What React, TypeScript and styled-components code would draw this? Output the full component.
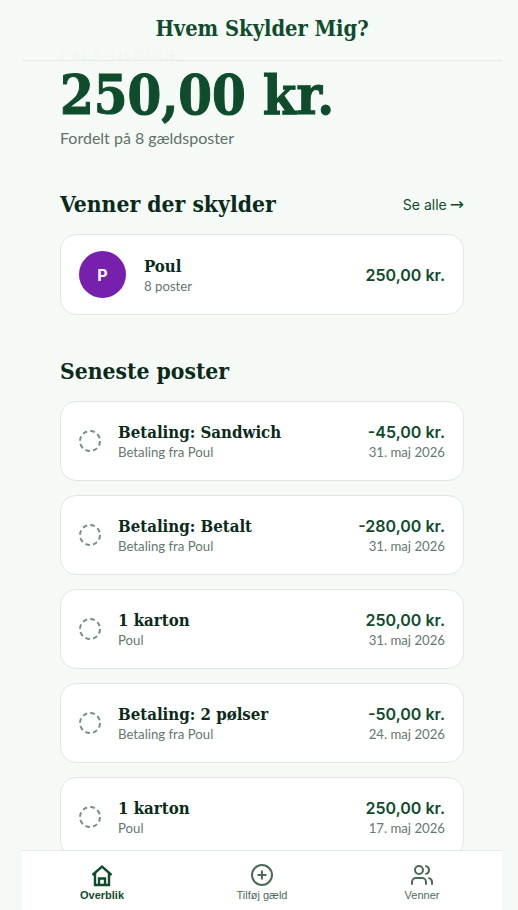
import styled, { createGlobalStyle } from "styled-components";
import { Users } from "lucide-react";

const GlobalStyle = createGlobalStyle`
  html, body {
    margin: 0;
    padding: 0;
    height: 100%;
    background: #f6faf7;
    font-family: "Inter", "Liberation Sans", sans-serif;
  }
  * { box-sizing: border-box; }
`;

const serif = `"DejaVu Serif Condensed", "DejaVu Serif", "Liberation Serif", serif`;
const sans = `"Lato", "Inter", "Liberation Sans", sans-serif`;

const Screen = styled.div`
  position: relative;
  width: 480px;
  height: 910px;
  margin-left: 22px;
  overflow: hidden;
`;

const Header = styled.header`
  position: absolute;
  top: 0;
  left: 0;
  right: 0;
  height: 61px;
  display: flex;
  justify-content: center;
  align-items: center;
  padding-bottom: 4px;
  background: rgba(246, 250, 247, 0.97);
  border-bottom: 1px solid #e3e9e5;
`;

const HeaderTitle = styled.h1`
  margin: 0;
  font-family: ${serif};
  font-size: 21.7px;
  font-weight: 700;
  color: #0f4c2c;
`;

const Main = styled.main`
  padding: 47px 38px 0;
`;

const Label = styled.div`
  font-size: 14px;
  line-height: 17px;
  letter-spacing: 1.8px;
  color: #5f7268;
`;

const Total = styled.div`
  margin-top: -1px;
  font-family: ${serif};
  font-size: 54px;
  line-height: 64px;
  font-weight: 700;
  -webkit-text-stroke: 1px #0f4c2c;
  color: #0f4c2c;
`;

const TotalNote = styled.div`
  margin-top: 1px;
  font-family: ${sans};
  font-size: 16px;
  line-height: 20px;
  color: #5f7268;
`;

const SectionHead = styled.div<{ $top: number }>`
  display: flex;
  justify-content: space-between;
  align-items: center;
  margin-top: ${(p) => p.$top}px;
  margin-bottom: 15px;
  height: 30px;
`;

const SectionTitle = styled.h2`
  margin: 0;
  font-family: ${serif};
  font-size: 22.7px;
  font-weight: 700;
  color: #0a2a1a;
`;

const SeeAll = styled.a`
  display: flex;
  align-items: center;
  gap: 3px;
  font-family: "Inter", sans-serif;
  font-size: 14px;
  color: #0f4c2c;
`;

const Arrow = styled.span`
  font-family: "DejaVu Sans", sans-serif;
  font-size: 17px;
  line-height: 14px;
`;

const Card = styled.div<{ $height: number }>`
  display: flex;
  align-items: center;
  height: ${(p) => p.$height}px;
  padding: 0 18px;
  background: #ffffff;
  border: 1px solid #e1e8e3;
  border-radius: 16px;
`;

const Avatar = styled.div`
  width: 47px;
  height: 47px;
  border-radius: 50%;
  display: flex;
  align-items: center;
  justify-content: center;
  margin-right: 18px;
  background: #7620ad;
  color: #ffffff;
  font-family: "Inter", sans-serif;
  font-size: 16px;
  font-weight: 700;
`;

const Spinner = styled.svg`
  flex: none;
  display: block;
  margin-right: 17px;
`;

const Info = styled.div`
  flex: 1;
  min-width: 0;
`;

const Name = styled.div`
  font-family: ${serif};
  font-size: 16.7px;
  line-height: 22px;
  font-weight: 700;
  color: #0a2a1a;
`;

const Sub = styled.div`
  font-family: ${sans};
  font-size: 13.2px;
  line-height: 18px;
  color: #66786e;
`;

const Right = styled.div`
  text-align: right;
`;

const Amount = styled.div`
  font-family: "Inter", sans-serif;
  font-size: 16px;
  line-height: 22px;
  font-weight: 600;
  color: #0f4c2c;
`;

const List = styled.div`
  display: flex;
  flex-direction: column;
  gap: 14px;
`;

const Nav = styled.nav`
  position: absolute;
  left: 0;
  right: 0;
  bottom: 0;
  height: 60px;
  display: grid;
  grid-template-columns: repeat(3, 1fr);
  background: #ffffff;
  border-top: 1px solid #e3e9e5;
`;

const NavItem = styled.div<{ $active?: boolean }>`
  display: flex;
  flex-direction: column;
  align-items: center;
  padding-top: 12px;
  font-family: "Liberation Sans", sans-serif;
  font-size: 11px;
  line-height: 13px;
  font-weight: ${(p) => (p.$active ? 700 : 400)};
  color: ${(p) => (p.$active ? "#0f4c2c" : "#4b6b59")};
  svg {
    display: block;
    margin-bottom: 2px;
  }
`;

const posts = [
  { title: "Betaling: Sandwich", sub: "Betaling fra Poul", amount: "-45,00 kr.", date: "31. maj 2026" },
  { title: "Betaling: Betalt", sub: "Betaling fra Poul", amount: "-280,00 kr.", date: "31. maj 2026" },
  { title: "1 karton", sub: "Poul", amount: "250,00 kr.", date: "31. maj 2026" },
  { title: "Betaling: 2 pølser", sub: "Betaling fra Poul", amount: "-50,00 kr.", date: "24. maj 2026" },
  { title: "1 karton", sub: "Poul", amount: "250,00 kr.", date: "17. maj 2026" },
];

function App() {
  return (
    <Screen>
      <GlobalStyle />
      <Main>
        <Label>I ALT TILGODE</Label>
        <Total>250,00 kr.</Total>
        <TotalNote>Fordelt på 8 gældsposter</TotalNote>
        <SectionHead $top={41}>
          <SectionTitle>Venner der skylder</SectionTitle>
          <SeeAll>
            Se alle <Arrow>→</Arrow>
          </SeeAll>
        </SectionHead>
        <Card $height={81}>
          <Avatar>P</Avatar>
          <Info>
            <Name>Poul</Name>
            <Sub>8 poster</Sub>
          </Info>
          <Right>
            <Amount>250,00 kr.</Amount>
          </Right>
        </Card>
        <SectionHead $top={41}>
          <SectionTitle>Seneste poster</SectionTitle>
        </SectionHead>
        <List>
          {posts.map((post) => (
            <Card $height={80} key={post.title + post.date}>
              <Spinner width="22" height="22" viewBox="0 0 22 22" fill="none">
                <circle cx="11" cy="11" r="10" stroke="#74917f" strokeWidth="2" strokeDasharray="4.6 3.25" />
              </Spinner>
              <Info>
                <Name>{post.title}</Name>
                <Sub>{post.sub}</Sub>
              </Info>
              <Right>
                <Amount>{post.amount}</Amount>
                <Sub>{post.date}</Sub>
              </Right>
            </Card>
          ))}
        </List>
      </Main>
      <Header>
        <HeaderTitle>Hvem Skylder Mig?</HeaderTitle>
      </Header>
      <Nav>
        <NavItem $active>
          <svg width="24" height="24" viewBox="0 0 24 24" fill="none" stroke="currentColor" strokeWidth="2.4">
            <path d="M2.5 12 12 3.5l9.5 8.5" />
            <path d="M5 10v12h14V10" />
            <path d="M9 22v-6.5h6V22" />
          </svg>
          Overblik
        </NavItem>
        <NavItem>
          <svg width="24" height="24" viewBox="0 0 24 24" fill="none" stroke="currentColor" strokeWidth="2">
            <circle cx="12" cy="12" r="10" />
            <path d="M12 7.5v9M7.5 12h9" />
          </svg>
          Tilføj gæld
        </NavItem>
        <NavItem>
          <Users size={24} strokeWidth={2} />
          Venner
        </NavItem>
      </Nav>
    </Screen>
  );
}

export default App;
